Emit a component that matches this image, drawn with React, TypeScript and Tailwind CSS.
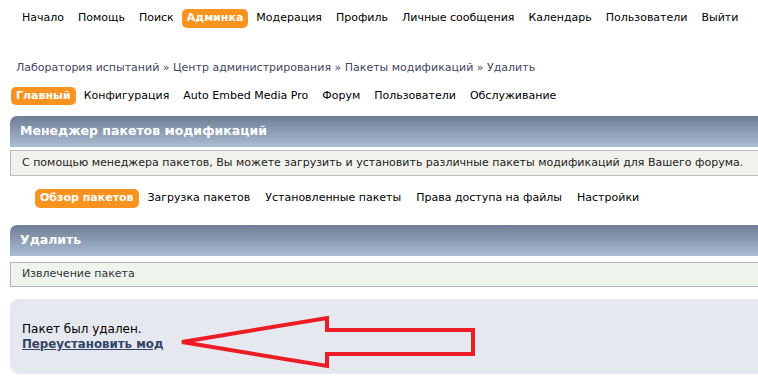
import React from "react";

const topNav = [
  "Начало",
  "Помощь",
  "Поиск",
  "Админка",
  "Модерация",
  "Профиль",
  "Личные сообщения",
  "Календарь",
  "Пользователи",
  "Выйти",
];

const adminNav = ["Главный", "Конфигурация", "Auto Embed Media Pro", "Форум", "Пользователи", "Обслуживание"];

const packageNav = ["Обзор пакетов", "Загрузка пакетов", "Установленные пакеты", "Права доступа на файлы", "Настройки"];

function NavItem({ label, active }: { label: string; active: boolean }) {
  if (active) {
    return (
      <span className="flex h-full items-center whitespace-nowrap rounded-[5px] bg-[#f7931e] px-[5px] font-bold text-white">
        {label}
      </span>
    );
  }
  return <span className="flex h-full items-center whitespace-nowrap px-[6px] text-black">{label}</span>;
}

function SectionHeader({ title }: { title: string }) {
  return (
    <div className="flex h-[31px] items-center rounded-tl-[7px] bg-gradient-to-b from-[#6d7e95] to-[#abbdd3] pl-[10px] text-[12.5px] font-bold text-white">
      {title}
    </div>
  );
}

function Arrow() {
  return (
    <svg className="pointer-events-none absolute left-0 top-0" width="500" height="80" viewBox="0 0 500 80">
      <polygon
        points="172,43 317,19 317,31 463,31 463,55 317,55 317,67"
        fill="none"
        stroke="#ed1c24"
        strokeWidth="4"
        strokeLinejoin="miter"
      />
    </svg>
  );
}

export default function App() {
  return (
    <div className="h-[380px] w-[758px] overflow-hidden bg-white font-['DejaVu_Sans','Liberation_Sans',sans-serif]">
      <nav className="ml-[16px] mt-[9px] flex h-[19px] gap-[2px] text-[11px]">
        {topNav.map((item) => (
          <NavItem key={item} label={item} active={item === "Админка"} />
        ))}
      </nav>

      <div className="ml-[16px] mt-[32px] whitespace-nowrap text-[11px] leading-[16px] text-[#45455e]">
        Лаборатория испытаний » Центр администрирования » Пакеты модификаций » Удалить
      </div>

      <div className="w-[800px] pl-[10px]">
        <nav className="ml-[1px] mt-[11px] flex h-[18px] gap-[2px] text-[11px]">
          {adminNav.map((item) => (
            <NavItem key={item} label={item} active={item === "Главный"} />
          ))}
        </nav>

        <div className="mt-[11px]">
          <SectionHeader title="Менеджер пакетов модификаций" />
        </div>
        <div className="mt-[3px] flex h-[26px] items-center whitespace-nowrap border-y border-l border-[#bdbdbd] bg-[#f2f2ec] pl-[11px] text-[11px] text-[#222]">
          С помощью менеджера пакетов, Вы можете загрузить и установить различные пакеты модификаций для Вашего форума.
        </div>

        <nav className="ml-[25px] mt-[13px] flex h-[19px] gap-[3px] text-[11px]">
          {packageNav.map((item) => (
            <NavItem key={item} label={item} active={item === "Обзор пакетов"} />
          ))}
        </nav>

        <div className="mt-[17px]">
          <SectionHeader title="Удалить" />
        </div>
        <div className="mt-[6px] flex h-[25px] items-center border-y border-l border-[#b5b5b5] bg-[#eef5ee] pl-[11px] text-[11px] text-[#333]">
          Извлечение пакета
        </div>

        <div className="relative mt-[12px] h-[75px] rounded-l-[9px] bg-[#e5e8ee] pl-[12px] pt-[23px] text-[12px] leading-[15px]">
          <div className="text-black">Пакет был удален.</div>
          <a href="#" className="text-[11.8px] font-bold text-[#334466] underline">
            Переустановить мод
          </a>
          <Arrow />
        </div>
      </div>
    </div>
  );
}
